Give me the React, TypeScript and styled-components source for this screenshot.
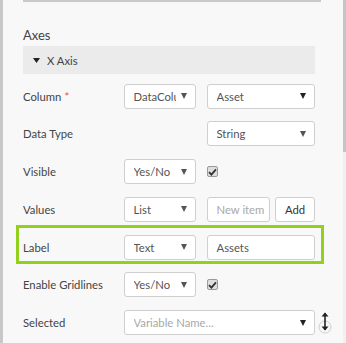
import styled, { createGlobalStyle } from 'styled-components'

const GlobalStyle = createGlobalStyle`
    html, body {
        margin: 0;
        padding: 0;
        background: #f8f8f8;
    }
    body {
        font-family: Lato, "Open Sans", sans-serif;
        color: #444;
    }
`

const Frame = styled.div`
    display: flex;
    width: 346px;
    height: 343px;
    overflow: hidden;
    border-left: 3px solid #c8c8c8;
    box-sizing: border-box;
`

const Panel = styled.div`
    flex: 1;
    padding: 0 0 0 20px;
`

const Scrollbar = styled.div`
    width: 3px;
    margin-left: auto;
    background: #f0f0f0;
    display: flex;
    flex-direction: column;
    &::before {
        content: "";
        height: 152px;
        background: #c4c4c4;
    }
`

const TopRule = styled.div`
    width: 298px;
    height: 2px;
    background: #c9c9c9;
`

const SectionTitle = styled.div`
    margin-top: 25px;
    font-size: 13px;
    line-height: 16px;
    color: #444;
`

const AxisHeader = styled.div`
    margin-top: 3px;
    width: 292px;
    height: 28px;
    background: #ebebeb;
    display: flex;
    align-items: center;
    gap: 7px;
    padding-left: 10px;
    box-sizing: border-box;
    font-size: 11.3px;
    color: #444;
`

const Rows = styled.div`
    display: flex;
    flex-direction: column;
    gap: 12.8px;
    margin-top: 9.5px;
    width: 292px;
`

const Row = styled.div<{ $highlight?: boolean }>`
    position: relative;
    display: flex;
    align-items: center;
    height: 25px;
    ${({ $highlight }) => $highlight ? `
        &::before {
            content: "";
            position: absolute;
            top: -10px;
            bottom: -4px;
            left: -7px;
            right: -9px;
            border: 3px solid #92d01c;
            pointer-events: none;
        }
    ` : ''}
`

const Label = styled.div`
    flex: none;
    width: 101px;
    font-size: 11.3px;
    color: #444;
    white-space: nowrap;
`

const Required = styled.span`
    color: #e84c4c;
    margin-left: 3px;
`

const Cell = styled.div<{ $width: number, $indent?: boolean }>`
    flex: none;
    width: ${({ $width }) => $width}px;
    margin-left: ${({ $indent }) => $indent ? '11px' : '0'};
    display: flex;
    align-items: center;
    gap: 5px;
    position: relative;
`

const Box = styled.div`
    flex: 1;
    min-width: 0;
    height: 25px;
    box-sizing: border-box;
    background: #fff;
    border: 1px solid #cfcfcf;
    border-radius: 3px;
    display: flex;
    align-items: center;
    padding: 0 0 0 8.5px;
    font-size: 11.3px;
    color: #555;
    overflow: hidden;
    white-space: nowrap;
`

const BoxText = styled.span<{ $placeholder?: boolean }>`
    flex: 1;
    min-width: 0;
    overflow: hidden;
    color: ${({ $placeholder }) => $placeholder ? '#a8a8a8' : '#555'};
`

const Arrow = styled.span<{ $light?: boolean }>`
    flex: none;
    width: 0;
    height: 0;
    margin: 0 8px 0 5px;
    border-left: 3.5px solid transparent;
    border-right: 3.5px solid transparent;
    border-top: 6px solid ${({ $light }) => $light ? '#555' : '#222'};
`

const Button = styled.div`
    flex: none;
    width: 40px;
    height: 25px;
    box-sizing: border-box;
    background: #fff;
    border: 1px solid #cfcfcf;
    border-radius: 3px;
    display: flex;
    align-items: center;
    justify-content: center;
    font-size: 11.3px;
    color: #333;
`

const Check = styled.div`
    width: 11px;
    height: 11px;
    box-sizing: border-box;
    border: 1px solid #9a9a9a;
    border-radius: 2px;
    background: #dedede;
    display: flex;
    align-items: center;
    justify-content: center;
`

const SortIcon = styled.svg`
    position: absolute;
    right: -17px;
    top: 1px;
`

const Caret = () => (
    <svg width="7" height="5" viewBox="0 0 7 5"><path d="M0 0h7L3.5 5z" fill="#222" /></svg>
)

const Tick = () => (
    <Check>
        <svg width="9" height="8" viewBox="0 0 9 8">
            <path d="M1 4.2 3.4 6.6 8 1.4" stroke="#333" strokeWidth="1.8" fill="none" />
        </svg>
    </Check>
)

const Select = ({ value, light, placeholder }: { value: string, light?: boolean, placeholder?: boolean }) => (
    <Box>
        <BoxText $placeholder={placeholder}>{value}</BoxText>
        <Arrow $light={light} />
    </Box>
)

export default function App() {
    return (
        <>
            <GlobalStyle />
            <Frame>
                <Panel>
                    <TopRule />
                    <SectionTitle>Axes</SectionTitle>
                    <AxisHeader><Caret />X Axis</AxisHeader>
                    <Rows>
                        <Row>
                            <Label>Column<Required>*</Required></Label>
                            <Cell $width={72}><Select value="DataColumn" light /></Cell>
                            <Cell $width={108} $indent><Select value="Asset" /></Cell>
                        </Row>
                        <Row>
                            <Label>Data Type</Label>
                            <Cell $width={72} />
                            <Cell $width={108} $indent><Select value="String" light /></Cell>
                        </Row>
                        <Row>
                            <Label>Visible</Label>
                            <Cell $width={72}><Select value="Yes/No" light /></Cell>
                            <Cell $width={108} $indent><Tick /></Cell>
                        </Row>
                        <Row>
                            <Label>Values</Label>
                            <Cell $width={72}><Select value="List" light /></Cell>
                            <Cell $width={108} $indent>
                                <Box><BoxText $placeholder>New item</BoxText></Box>
                                <Button>Add</Button>
                            </Cell>
                        </Row>
                        <Row $highlight>
                            <Label>Label</Label>
                            <Cell $width={72}><Select value="Text" light /></Cell>
                            <Cell $width={108} $indent><Box>Assets</Box></Cell>
                        </Row>
                        <Row>
                            <Label>Enable Gridlines</Label>
                            <Cell $width={72}><Select value="Yes/No" light /></Cell>
                            <Cell $width={108} $indent><Tick /></Cell>
                        </Row>
                        <Row>
                            <Label>Selected</Label>
                            <Cell $width={191}>
                                <Select value="Variable Name..." placeholder />
                                <SortIcon width="14" height="24" viewBox="0 0 14 24">
                                    <circle cx="7" cy="16" r="6" fill="none" stroke="#cfcfcf" strokeWidth="1" />
                                    <path d="M7 2v17" stroke="#222" strokeWidth="1.6" />
                                    <path d="M3.5 5.5 7 1.5l3.5 4zM3.5 15.5 7 19.5l3.5-4z" fill="#222" />
                                </SortIcon>
                            </Cell>
                        </Row>
                    </Rows>
                </Panel>
                <Scrollbar />
            </Frame>
        </>
    )
}
